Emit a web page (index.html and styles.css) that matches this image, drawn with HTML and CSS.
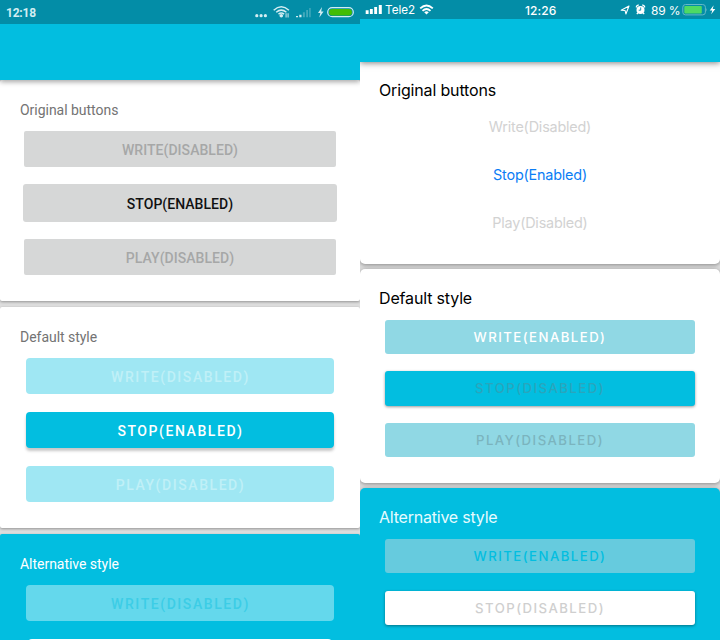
FILE: index.html
```html
<!DOCTYPE html>
<html lang="en">
<head>
<meta charset="utf-8">
<title>Button styles</title>
<link rel="stylesheet" href="styles.css">
</head>
<body>
<main class="screens">
  <section class="phone android">
    <header class="toolbar">
      <div class="status">
        <span class="clock">12:18</span>
        <svg class="status-icons" width="120" height="24" viewBox="0 0 120 24">
          <g fill="#d3edf2"><circle cx="16.8" cy="15.7" r="1.6"/><circle cx="21.1" cy="15.7" r="1.6"/><circle cx="25.4" cy="15.7" r="1.6"/>
          <circle cx="41.3" cy="15.8" r="1.8"/>
          <path d="M46.1 13.2v4.2M48.1 13.2v4.2" stroke="#a5d5df" stroke-width="1.3"/>
          <path d="M56 17.3v-1.4h2v1.4zM59.3 17.3v-2.6h2.2v2.6z"/></g>
          <g fill="none" stroke="#d3edf2" stroke-width="1.5"><path d="M33.7 10.2q7.6-6.8 15.2 0M36.2 12.3q5.1-4.4 10.2 0M38.5 14.2q2.8-2.2 5.6 0"/></g>
          <path d="M62.9 17.3v-5h2v5zM66.2 17.3v-7.2h1.8v7.2zM69.2 17.3V8h1.5v9.3z" fill="#43a9bb"/>
          <path d="M82 7l-4 6h2.3l-1 4.4 4.3-6h-2.4z" fill="#d3edf2"/>
          <rect x="87.7" y="7.7" width="25.6" height="9" rx="4.5" fill="none" stroke="#d3edf2" stroke-width="1.2"/>
          <rect x="89.1" y="9" width="22.8" height="6.4" rx="3.2" fill="#43bd05"/>
        </svg>
      </div>
    </header>
    <article class="card">
      <h2>Original buttons</h2>
      <div class="buttons plain">
        <div class="btn muted"><span>WRITE(DISABLED)</span></div>
        <div class="btn focus"><span>STOP(ENABLED)</span></div>
        <div class="btn muted"><span>PLAY(DISABLED)</span></div>
      </div>
    </article>
    <article class="card">
      <h2>Default style</h2>
      <div class="buttons">
        <div class="btn light"><span>WRITE(DISABLED)</span></div>
        <div class="btn solid"><span>STOP(ENABLED)</span></div>
        <div class="btn light"><span>PLAY(DISABLED)</span></div>
      </div>
    </article>
    <article class="card alt">
      <h2>Alternative style</h2>
      <div class="buttons">
        <div class="btn faded"><span>WRITE(DISABLED)</span></div>
        <div class="btn white"></div>
      </div>
    </article>
  </section>

  <section class="phone ios">
    <header class="toolbar">
      <div class="status">
        <svg width="25" height="19" viewBox="0 0 25 19"><path d="M5.7 14v-3.8h2.9V14zM9.9 14V9h2.9v5zM14.2 14V7h2.9v7zM18.8 14V5h3v9z" fill="#fff"/></svg>
        <span class="carrier">Tele2</span>
        <svg class="wifi" width="16" height="19" viewBox="0 0 16 19"><g fill="none" stroke="#fff" stroke-width="1.9"><path d="M1.2 8.4q6.3-5.6 12.6 0M3.5 10.9q4-3.6 8 0"/></g><path d="M5.2 12.2q2.3-1.7 4.6 0L7.5 14.4z" fill="#fff"/></svg>
        <span class="clock">12:26</span>
        <svg class="location" width="28" height="19" viewBox="0 0 28 19"><path d="M1.2 10.3l7.8-4.3-3.1 8-.8-3.5z" fill="none" stroke="#fff" stroke-width="1.1" stroke-linejoin="round"/>
          <circle cx="20.5" cy="9.9" r="4" fill="#fff"/><path d="M16.4 7.5a2 2 0 0 1 2.4-2.3M22.2 5.2a2 2 0 0 1 2.4 2.3M17.8 13l-1 1.1M23.2 13l1 1.1" stroke="#fff" stroke-width="1.3" fill="none"/><path d="M20.7 7.4v2.8h-2" stroke="#048ba6" fill="none" stroke-width=".9"/></svg>
        <span class="percent">89 %</span>
        <svg class="battery" width="36" height="19" viewBox="0 0 36 19"><rect x=".8" y="4.5" width="22.6" height="10.4" rx="2.7" fill="none" stroke="#65b8c8" stroke-width="1"/><rect x="2.3" y="6" width="17.5" height="7.4" rx="1" fill="#4ed964"/><path d="M24.4 8q1.5 1.7 0 3.4z" fill="#65b8c8"/><path d="M31.7 5.2l-4 5.3h2.6l-1.1 3.7 4.1-5.3h-2.6z" fill="#fff"/></svg>
      </div>
    </header>
    <article class="card">
      <h2>Original buttons</h2>
      <div class="buttons plain">
        <div class="btn muted"><span>Write(Disabled)</span></div>
        <div class="btn focus"><span>Stop(Enabled)</span></div>
        <div class="btn muted"><span>Play(Disabled)</span></div>
      </div>
    </article>
    <article class="card">
      <h2>Default style</h2>
      <div class="buttons">
        <div class="btn light on"><span>WRITE(ENABLED)</span></div>
        <div class="btn solid"><span>STOP(DISABLED)</span></div>
        <div class="btn light"><span>PLAY(DISABLED)</span></div>
      </div>
    </article>
    <article class="card alt">
      <h2>Alternative style</h2>
      <div class="buttons">
        <div class="btn faded"><span>WRITE(ENABLED)</span></div>
        <div class="btn white"><span>STOP(DISABLED)</span></div>
      </div>
    </article>
  </section>
</main>
</body>
</html>
```
FILE: styles.css
```css
* { box-sizing: border-box; }
body { margin: 0; overflow: hidden; }
.screens { display: grid; grid-template-columns: 360px 360px; height: 640px; overflow: hidden; }
.phone { display: flex; flex-direction: column; height: 640px; overflow: hidden; background: #dfdfdf; }
.toolbar { position: relative; z-index: 1; flex: none; background: #02bee0; box-shadow: 0 1px 6px rgba(0, 0, 0, .5); }
.status { display: flex; align-items: center; background: #038da7; }
.card { flex: none; background: #fff; }
h2 { margin: 0; font-weight: 400; white-space: nowrap; }
.buttons { display: flex; flex-direction: column; }
.btn { display: flex; align-items: center; justify-content: center; white-space: nowrap; }
.alt { background: #02bee0; }

.android { font-family: Roboto, sans-serif; }
.android .toolbar { height: 80px; box-shadow: 0 2px 5px rgba(0, 0, 0, .35); }
.android .status { height: 24px; padding-left: 6px; justify-content: space-between; color: #d3edf2; }
.android .clock { font-size: 12px; font-weight: 700; line-height: 24px; padding-top: 1px; letter-spacing: -.2px; }
.android .card { height: 221px; margin-bottom: 6px; padding: 20px 26px 0; border-radius: 2px; box-shadow: 0 1px 3px rgba(0, 0, 0, .35); }
.android h2 { margin-left: -6px; height: 31px; font-size: 14px; line-height: 20px; color: #737373; letter-spacing: -.03px; }
.android .alt h2 { color: #fff; }
.android .buttons { gap: 18px; }
.android .btn { height: 36px; padding: 1px 0 0 1px; border-radius: 4px; font-size: 14px; font-weight: 500; letter-spacing: 1.56px; }
.android .plain .btn { margin: 0 -2px; padding-left: 0; border-radius: 2px; background: #d6d7d7; letter-spacing: .04px; }
.android .muted { color: #a6a7a7; }
.android .focus { color: #111; box-shadow: 0 0 0 1px #d6d7d7; }
.android .light { background: #9fe7f3; color: #c0f0f7; }
.android .solid { background: #02bee0; color: #fff; box-shadow: 0 3px 3px rgba(0, 0, 0, .22); }
.android .faded { background: #64d8ec; color: #3ccde6; }
.android .white { margin: 0 2px; background: #fff; }

.ios { font-family: Inter, sans-serif; }
.ios .toolbar { height: 62px; }
.ios .status { height: 19px; color: #fff; font-size: 12px; line-height: 19px; }
.ios .carrier { width: 31px; padding-top: 1px; font-size: 11.7px; }
.ios .wifi { margin-left: 3px; }
.ios .clock { width: 36px; margin-left: 90px; padding-top: 1px; font-weight: 500; font-size: 12px; letter-spacing: .1px; }
.ios .location { margin-left: 59px; }
.ios .percent { width: 30px; margin-left: 3px; padding-top: 1px; white-space: nowrap; letter-spacing: -.15px; }
.ios .battery { margin-left: 1px; }
.ios .card { height: 214px; margin-bottom: 5.3px; padding: 18px 25px 0; border-radius: 5px; box-shadow: 0 1px 4px rgba(0, 0, 0, .4); }
.ios .toolbar + .card { height: 201.7px; padding-top: 17px; border-radius: 0 0 5px 5px; }
.ios h2 { height: 32.7px; margin-left: -6px; font-size: 16px; line-height: 22px; color: #000; letter-spacing: -.16px; }
.ios .alt h2 { color: #e6fbfe; letter-spacing: -.22px; }
.ios .buttons { gap: 17.2px; }
.ios .btn { height: 34.4px; border-radius: 3px; font-size: 13.2px; font-weight: 500; letter-spacing: 1.45px; }
.ios .plain { gap: 0; margin-top: -9.4px; }
.ios .plain .btn { height: 48px; font-size: 14.4px; font-weight: 400; letter-spacing: -.2px; }
.ios .muted { color: #d2d2d2; }
.ios .focus { color: #0b7df5; }
.ios .light { background: #90d8e4; color: #7bb4be; }
.ios .btn.on { color: #fff; }
.ios .solid { background: #02bee0; color: #29a5bc; box-shadow: 0 1px 3px rgba(0, 0, 0, .4); }
.ios .faded { background: #66cbde; color: #02bee0; }
.ios .white { background: #fff; color: #cfcfcf; box-shadow: 0 1px 3px rgba(0, 0, 0, .4); }
```
